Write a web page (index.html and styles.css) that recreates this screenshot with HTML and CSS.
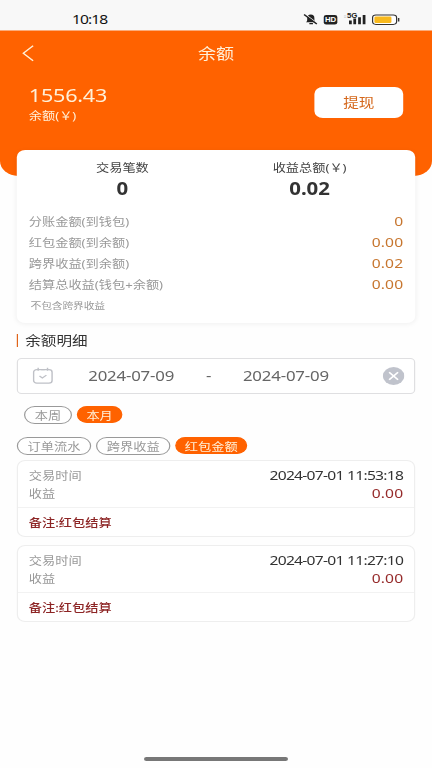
FILE: index.html
```html
<!DOCTYPE html>
<html lang="zh-CN">
<head>
<meta charset="utf-8">
<title>余额</title>
<link rel="stylesheet" href="styles.css">
</head>
<body>
<div class="screen">
  <div class="status">
    <span class="clock">10:18</span>
    <svg class="status-icons" width="84" height="14" viewBox="0 0 84 14">
      <path d="M3 10.2C4.2 9.2 4 7.6 4 6.2A3 3.6 0 0 1 10 6.2C10 7.6 9.9 9.2 11 10.2Z" fill="#222"/>
      <path d="M5.8 11.6h3" stroke="#222" stroke-width="1.2"/>
      <path d="M2.4 2.4L12.6 11.6" stroke="#f8f8f8" stroke-width="1.2"/>
      <path d="M1.4 2.4L12 12" stroke="#222" stroke-width="1.3"/>
      <rect x="17.8" y="3" width="11.3" height="9.6" rx="2" fill="#222"/>
      <text x="23.5" y="10.3" class="hd">HD</text>
      <path d="M34.6 3.8h2M34.6 5.4h2" stroke="#ccc" stroke-width=".7"/>
      <text x="37.2" y="6.2" class="fiveg">5G</text>
      <path d="M40 8.6v3.6M43.6 6.6v5.6M47.6 5.2v7M51.4 3v9.2" stroke="#222" stroke-width="2.3"/>
      <rect x="58.5" y="3" width="20" height="9.4" rx="2.8" fill="#fff" stroke="#333" stroke-width="1"/>
      <rect x="60" y="4.5" width="14.2" height="6.4" rx="1.2" fill="#f8b91d"/>
      <path d="M80.2 6v3.4" stroke="#333" stroke-width="1.2"/>
    </svg>
  </div>
  <header class="hero">
    <div class="nav">
      <svg class="back" width="12" height="18" viewBox="0 0 12 18"><path d="M9.6 1.8L1.4 9.2L9.6 16.8" fill="none" stroke="#fff0d8" stroke-width="1.2"/></svg>
      <h1>余额</h1>
      <span class="nav-end"></span>
    </div>
    <div class="balance">
      <div>
        <div class="amount">1556.43</div>
        <div class="unit">余额(￥)</div>
      </div>
      <button class="withdraw">提现</button>
    </div>
  </header>
  <main>
    <section class="summary">
      <div class="totals">
        <div><div class="total-name">交易笔数</div><div class="total-value">0</div></div>
        <div><div class="total-name">收益总额(￥)</div><div class="total-value">0.02</div></div>
      </div>
      <div class="line"><span>分账金额(到钱包)</span><b>0</b></div>
      <div class="line"><span>红包金额(到余额)</span><b>0.00</b></div>
      <div class="line"><span>跨界收益(到余额)</span><b>0.02</b></div>
      <div class="line"><span>结算总收益(钱包+余额)</span><b>0.00</b></div>
      <p class="note">不包含跨界收益</p>
    </section>
    <h2>余额明细</h2>
    <div class="range">
      <svg width="18" height="18" viewBox="0 0 18 18" fill="none" stroke="#bfc1c7" stroke-width="1.2"><rect x="1" y="2.6" width="15.4" height="13.6" rx="2.6"/><path d="M4.8 .8v3M12.6 .8v3M7.3 2.7h3M5.9 9l2.4 2l3.4-2.9"/></svg>
      <span class="date">2024-07-09</span>
      <span class="dash">-</span>
      <span class="date">2024-07-09</span>
      <svg class="clear" width="18" height="18" viewBox="0 0 18 18"><circle cx="9" cy="9" r="9" fill="#c0c3cc"/><path d="M5.3 5.2l7.4 7.6M12.7 5.2l-7.4 7.6" stroke="#fff" stroke-width="1.5"/></svg>
    </div>
    <div class="pills period">
      <span class="pill">本周</span><span class="pill on">本月</span>
    </div>
    <div class="pills kind">
      <span class="pill">订单流水</span><span class="pill">跨界收益</span><span class="pill on">红包金额</span>
    </div>
    <article class="record">
      <div class="pair"><span>交易时间</span><time>2024-07-01 11:53:18</time></div>
      <div class="pair"><span>收益</span><b>0.00</b></div>
      <div class="remark">备注:红包结算</div>
    </article>
    <article class="record">
      <div class="pair"><span>交易时间</span><time>2024-07-01 11:27:10</time></div>
      <div class="pair"><span>收益</span><b>0.00</b></div>
      <div class="remark">备注:红包结算</div>
    </article>
  </main>
  <div class="home"></div>
</div>
</body>
</html>
```
FILE: styles.css
```css
* { box-sizing: border-box; }
html, body { margin: 0; height: 768px; overflow: hidden; background: #fefefe; }
/* 360-unit wide layout stretched to the 432px viewport */
.screen {
  width: 360px; height: 768px;
  display: flex; flex-direction: column;
  transform: scaleX(1.2); transform-origin: 0 0;
  font-family: "Noto Sans", "Noto Sans CJK SC", sans-serif;
  font-size: 11px; color: #333;
}
.status {
  height: 31px; flex: none; background: #f8f8f8; border-bottom: 1px solid #fbab7a;
  display: flex; justify-content: space-between;
  padding: 12px 24px 0 60px;
}
.clock { font-size: 13px; line-height: 15px; letter-spacing: -.75px; color: #111; }
.hd { font: bold 6.5px "Liberation Sans", sans-serif; fill: #fff; text-anchor: middle; }
.fiveg { font: bold 6.5px "Liberation Sans", sans-serif; fill: #222; }
.hero { height: 145px; flex: none; background: #ff6200; border-radius: 0 0 15px 15px; color: #fff0d8; }
.nav { display: flex; align-items: center; justify-content: space-between; height: 44px; padding: 0 18px; }
.nav-end { width: 12px; }
h1 { margin: 0; font-size: 15px; line-height: 20px; font-weight: 400; }
.balance { display: flex; justify-content: space-between; padding: 9px 24px 0; }
.amount { font-size: 18px; line-height: 22px; letter-spacing: -.2px; }
.unit { line-height: 20px; }
.withdraw {
  width: 74px; height: 31px; margin-top: 3px; padding: 0 0 2px; border: 0; border-radius: 7px;
  background: #fff; color: #d5681c; font: inherit; font-size: 13px;
}
main { padding: 0 14px; margin-top: -26px; }
.summary { height: 173px; background: #fff; border-radius: 7px; box-shadow: 0 1px 5px rgba(0,0,0,.06); padding: 9px 10px 0; }
.totals { display: grid; grid-template-columns: 1fr 1fr; text-align: center; height: 52px; }
.total-name { line-height: 18px; color: #444; }
.total-value { font-size: 17px; line-height: 23px; font-weight: 700; }
.line { display: flex; justify-content: space-between; height: 21px; line-height: 21px; color: #999; }
.line b { font-weight: 400; font-size: 13px; color: #c7762f; letter-spacing: .1px; }
.note { margin: 1px 0 0 1.5px; font-size: 9px; line-height: 19px; color: #999; letter-spacing: -.15px; }
h2 { margin: 11px 0 0; height: 13px; border-left: 1px solid #e0641a; padding-left: 6px; font-size: 13px; line-height: 13px; font-weight: 400; }
.range {
  margin-top: 11px; height: 36px; border: 1px solid #dfdfe1; border-radius: 4px; background: #fff;
  display: flex; align-items: center; padding: 0 8px 0 12px;
}
.date, .dash { font-size: 14px; color: #666; line-height: 20px; letter-spacing: -.15px; }
.date { margin-left: 28.5px; }
.dash { margin-left: 26.5px; }
.dash + .date { margin-left: 26.5px; }
.clear { margin-left: auto; }
.pills { display: flex; gap: 4px; }
.period { margin: 12px 0 0 6px; }
.kind { margin-top: 13px; }
.pill { height: 18px; line-height: 17px; width: 62px; text-align: center; border: 1px solid #999; border-radius: 9px; color: #999; background: #fff; }
.period .pill { width: 40px; }
.pill.on, .period .pill.on { border-color: #ff6200; background: #ff6200; color: #fff0d8; height: 17px; line-height: 17px; }
.pill.on { width: 60px; }
.period .pill.on { width: 38px; }
.record { height: 76.5px; margin-top: 5px; border: 1px solid #eee; border-radius: 7px; background: #fff; padding-top: 6px; }
.record + .record { margin-top: 8.5px; }
.pair { display: flex; justify-content: space-between; height: 18px; line-height: 18px; padding: 0 9px; color: #999; }
.pair time { font-size: 13px; line-height: 16px; color: #333; letter-spacing: -.6px; }
.pair b { font-size: 13px; line-height: 16px; font-weight: 400; color: #962b2b; letter-spacing: .1px; }
.remark { margin-top: 4px; border-top: 1px solid #f2f2f2; padding: 0 9px; line-height: 30px; color: #8d2525; font-weight: 500; }
.home { width: 120px; height: 4px; border-radius: 2px; background: #777; margin: auto auto 7px; }
```
